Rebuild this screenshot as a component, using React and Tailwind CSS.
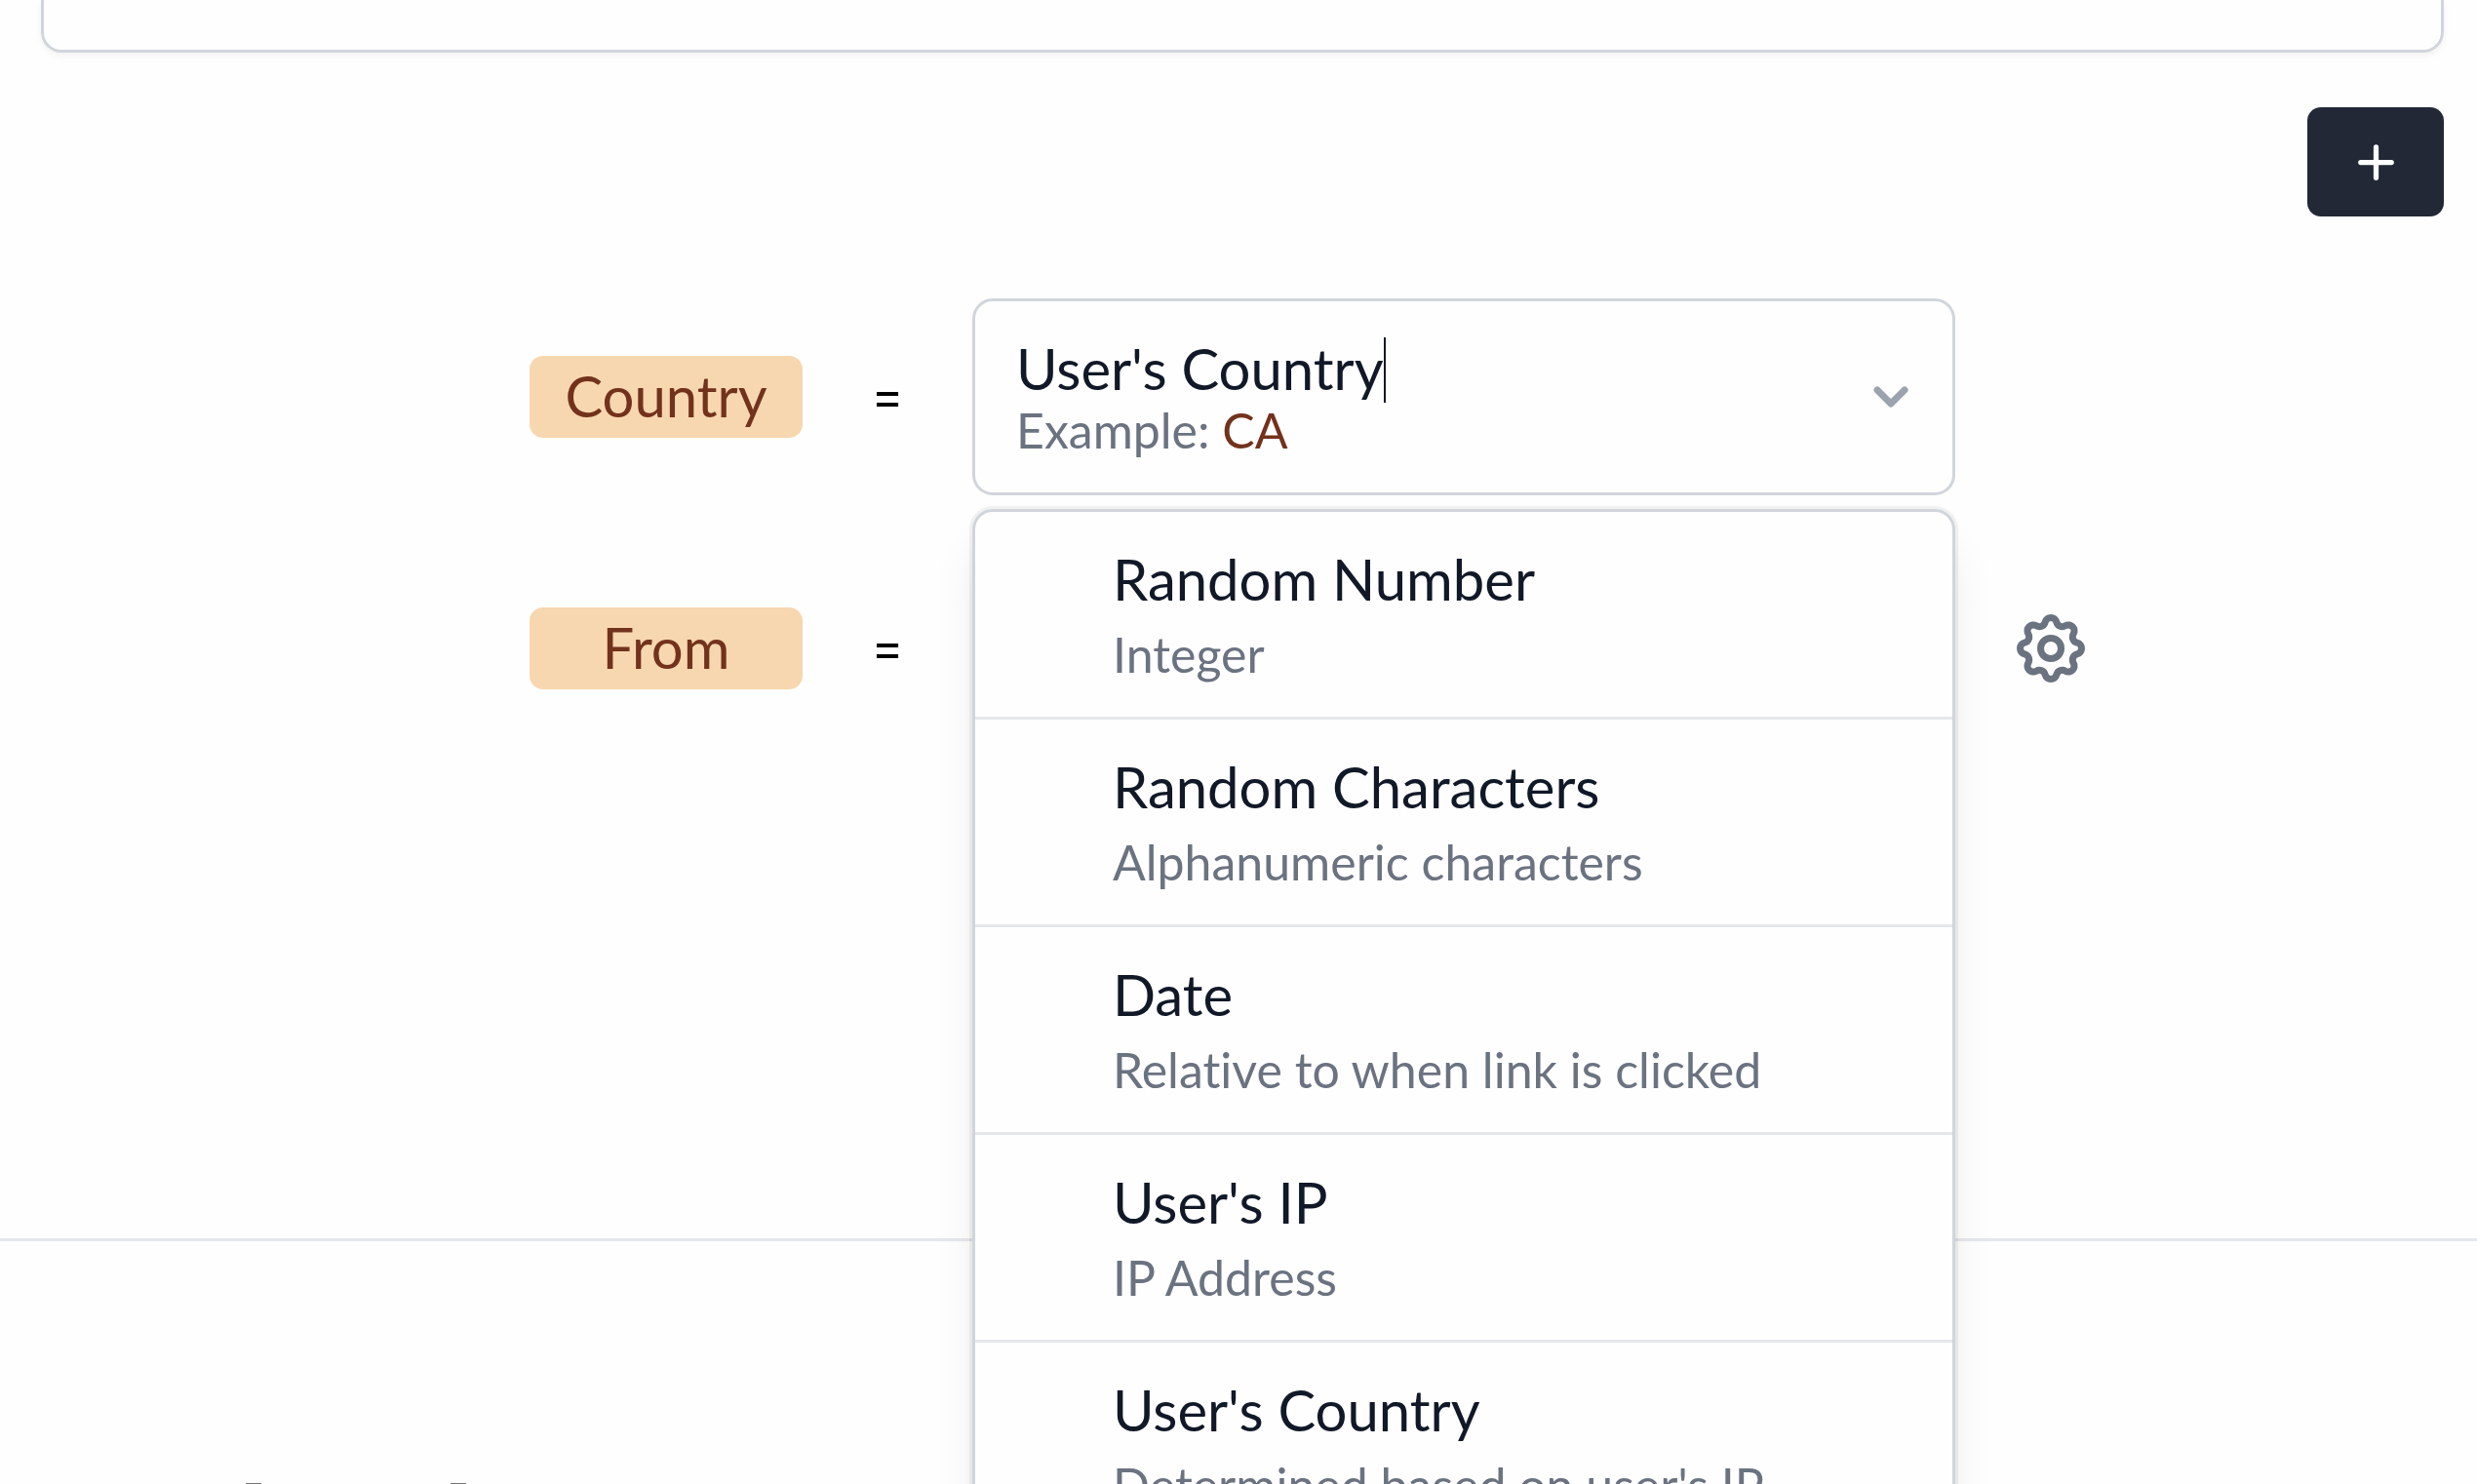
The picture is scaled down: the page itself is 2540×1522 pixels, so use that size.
import { useState } from "react";
import { HiChevronDown, HiOutlineCog } from "react-icons/hi";

const OPTIONS = [
  { name: "Random Number", description: "Integer" },
  { name: "Random Characters", description: "Alphanumeric characters" },
  { name: "Date", description: "Relative to when link is clicked" },
  { name: "User's IP", description: "IP Address" },
  { name: "User's Country", description: "Determined based on user's IP" },
];

const PlusIcon = () => (
  <svg className="size-[63px]" viewBox="0 0 24 24" fill="none" stroke="currentColor" strokeWidth="2" strokeLinecap="round" strokeLinejoin="round" aria-hidden="true">
    <path d="M12 6v6m0 0v6m0-6h6m-6 0H6" />
  </svg>
);

const Row = ({ label, children, action }) => (
  <div className="flex items-center justify-center gap-14">
    <div className="w-[84px] shrink-0" />
    <span className="w-[280px] shrink-0 rounded-[14px] bg-[#f7d7b0] pb-0.5 text-center text-[58px] leading-[82px] text-[#72321c]">
      {label}
    </span>
    <span className="w-[62px] shrink-0 pb-0.5 text-center font-[Inter,sans-serif] text-[50px] leading-14 text-black">=</span>
    <div className="h-[202px] w-[1008px]">{children}</div>
    <div className="flex w-[84px] shrink-0 justify-center">{action}</div>
  </div>
);

const VariableSelect = () => {
  const [query, setQuery] = useState("User's Country");
  const [open, setOpen] = useState(true);

  return (
    <div className="relative">
      <div className="flex items-center justify-between rounded-[21px] border-3 border-[#d1d5db] px-7 py-[35px] pl-[42px]">
        <div>
          <div className="flex h-[70px] items-center">
            <input
              type="text"
              aria-label="Country value"
              value={query}
              onChange={(e) => setQuery(e.target.value)}
              className="field-sizing-content bg-transparent pb-0.5 text-[58px] leading-[68px] text-[#111827] caret-transparent outline-none"
            />
            <span className="h-[67px] w-[2px] bg-[#111827]" />
          </div>
          <p className="pb-0.5 text-[50px] leading-[54px] text-[#6b7280]">
            Example: <span className="text-[#72321c]">CA</span>
          </p>
        </div>
        <button type="button" aria-label="Toggle options" onClick={() => setOpen(!open)} className="text-[#9ca3af]">
          <HiChevronDown className="size-[70px]" />
        </button>
      </div>

      {open && (
        <ul className="absolute inset-x-0 top-full z-10 mt-3.5 divide-y-3 divide-[#e5e7eb] rounded-[21px] border-3 border-[#d1d5db] bg-[#fefefe] shadow-[0_0_0_3px_rgba(0,0,0,0.05),0_35px_52px_-10px_rgba(0,0,0,0.1),0_14px_21px_-14px_rgba(0,0,0,0.1)]">
          {OPTIONS.map((option) => (
            <li key={option.name}>
              <button
                type="button"
                onClick={() => { setQuery(option.name); setOpen(false); }}
                className="block w-full pt-[27px] pr-7 pb-[29px] pl-[141px] text-left"
              >
                <span className="block text-[58px] leading-[84px] text-[#111827]">{option.name}</span>
                <span className="block text-[50px] leading-[70px] text-[#6b7280]">{option.description}</span>
              </button>
            </li>
          ))}
        </ul>
      )}
    </div>
  );
};

export default function App() {
  return (
    <div className="flex min-h-screen flex-col overflow-hidden bg-[#fefefe] font-[Lato,sans-serif] [font-variant-ligatures:none]">
      <div className="pr-[34px] pl-[42px]">
        <div className="h-[54px] rounded-b-[21px] border-3 border-t-0 border-[#d1d5db] shadow-[0_3px_7px_0_rgba(0,0,0,0.05)]" />
        <div className="mt-14 flex justify-end">
          <button type="button" aria-label="Add variable" className="flex h-28 w-[140px] items-center justify-center rounded-[14px] bg-[#222836] text-white">
            <PlusIcon />
          </button>
        </div>
        <div className="mt-[84px] flex flex-col gap-14">
          <Row label="Country">
            <VariableSelect />
          </Row>
          <Row
            label="From"
            action={
              <button type="button" aria-label="From settings" className="text-[#6b7280]">
                <HiOutlineCog className="size-[84px]" />
              </button>
            }
          />
        </div>
      </div>

      <div className="mt-[504px] flex grow flex-col justify-end border-t-3 border-[#e5e7eb]">
        {/* tops of the next section's heading */}
        <div className="flex gap-[194px] pl-[252px]">
          <span className="h-px w-4 rounded-full bg-neutral-500" />
          <span className="h-px w-4 rounded-full bg-neutral-500" />
        </div>
      </div>
    </div>
  );
}
